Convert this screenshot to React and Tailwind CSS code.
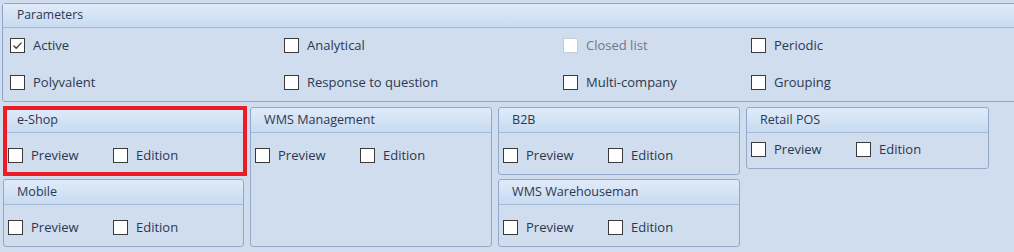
import React from 'react';

// Small square checkbox like the desktop client draws them
const Box = ({ checked, disabled }) => (
  <span
    className={`flex h-[15px] w-[15px] shrink-0 items-center justify-center border bg-white ${
      disabled ? 'border-[#c9cdd3]' : 'border-[#3a3a3a]'
    }`}
  >
    {checked && (
      <svg width="13" height="13" viewBox="0 0 13 13">
        <path d="M2.5 6.5 L5.2 9.2 L10.5 3.6" fill="none" stroke="#3c3c3c" strokeWidth="1.3" />
      </svg>
    )}
  </span>
);

const Check = ({ label, checked, disabled, className = '' }) => (
  <div className={`flex items-center ${className}`}>
    <Box checked={checked} disabled={disabled} />
    <span className={`ml-[8px] text-[13px] leading-[15px] ${disabled ? 'text-[#707784]' : 'text-[#2c3850]'}`}>
      {label}
    </span>
  </div>
);

const Header = ({ title, className = '' }) => (
  <div
    className={`flex items-center border-b border-[#a4b9d7] bg-gradient-to-b from-[#e0ebf9] to-[#c8dbf1] pl-[13px] text-[#2c3850] ${className}`}
  >
    {title}
  </div>
);

// Module panel with Preview / Edition
function Module({ title, compact, grow, children }) {
  return (
    <div
      className={`relative flex flex-col rounded-[3px] border border-[#92a8c8] bg-[#d0ddee] ${
        grow ? 'h-full' : ''
      }`}
    >
      <Header title={title} className="h-[25px] rounded-t-[3px] text-[12.6px]" />
      <div className={`flex pl-[4px] ${compact ? 'pt-[9px] pb-[11px]' : 'pt-[15px] pb-[11px]'}`}>
        <Check label="Preview" className="w-[105px]" />
        <Check label="Edition" />
      </div>
      {children}
    </div>
  );
}

const params = [
  [{ label: 'Active', checked: true }, { label: 'Analytical' }, { label: 'Closed list', disabled: true }, { label: 'Periodic' }],
  [{ label: 'Polyvalent' }, { label: 'Response to question' }, { label: 'Multi-company' }, { label: 'Grouping' }],
];

export default function App() {
  return (
    <div
      className="h-[252px] w-[1014px] overflow-hidden bg-[#d0ddee] px-[2px] pt-[3px] text-[12px]"
      style={{ fontFamily: '"Open Sans", "Noto Sans", sans-serif' }}
    >
      {/* Parameters */}
      <div className="-mr-[12px] rounded-l-[3px] border border-[#8ea4c6] bg-[#d0ddee]">
        <Header title="Parameters" className="h-[24px] pl-[14px] text-[12.2px]" />
        <div className="grid grid-cols-[274px_279px_188px_1fr] gap-y-[22px] pt-[10px] pb-[11px] pl-[7px]">
          {params.flat().map((p) => (
            <Check key={p.label} label={p.label} checked={p.checked} disabled={p.disabled} />
          ))}
        </div>
      </div>

      {/* Modules */}
      <div className="ml-[1px] mt-[5px] grid grid-cols-[241px_242px_242px_243px] gap-x-[6px]">
        <div className="flex flex-col gap-[4px]">
          <Module title="e-Shop">
            <div className="pointer-events-none absolute -top-[2px] -left-[1px] -right-[4px] -bottom-[2px] border-4 border-[#ed1c24]" />
          </Module>
          <Module title="Mobile" />
        </div>
        <div className="h-[140px]">
          <Module title="WMS Management" grow />
        </div>
        <div className="flex flex-col gap-[4px]">
          <Module title="B2B" />
          <Module title="WMS Warehouseman" />
        </div>
        <div className="self-start">
          <Module title="Retail POS" compact />
        </div>
      </div>
    </div>
  );
}
